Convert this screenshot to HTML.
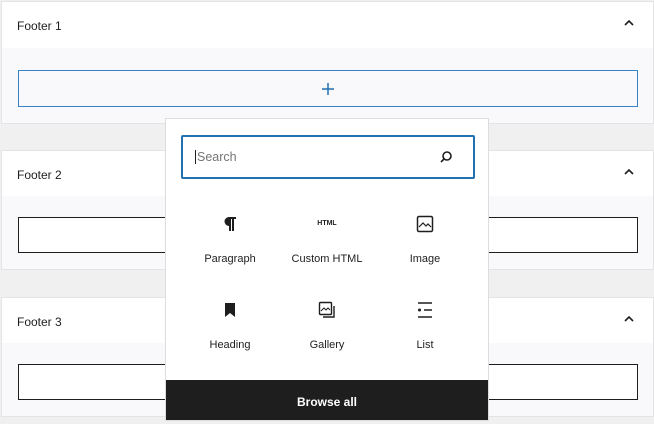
<!DOCTYPE html>
<html><head><style>
body{margin:0;width:654px;height:420px;background:#f0f0f1;font-family:"Liberation Sans",sans-serif;position:relative;overflow:hidden}
.p{position:absolute;left:1px;width:651px;background:#f9f9fb;border:1px solid #e4e4e7}
.h{height:45px;background:#fff;position:relative;font-size:12px;color:#1e1e1e}
.h span{position:absolute;left:15px;top:17px}
.h svg{position:absolute;right:18px;top:17px}
.box{position:absolute;left:16px;width:618px;height:34px;border:1px solid #1e1e1e;background:#fff}
.pop{position:absolute;left:165px;top:118px;width:324px;height:303px;background:#fff;border:1px solid #ddd;box-sizing:border-box}
.it{position:absolute;width:100px;text-align:center;font-size:11px;color:#1e1e1e}
.it svg{display:block;margin:0 auto 20px}
</style></head><body>
<div class="p" style="top:1px;height:121px"><div class="h" style="height:46px"><span>Footer 1</span><svg width="12" height="8" viewBox="0 0 12 8"><path d="M2 6L6 2L10 6" stroke="#1e1e1e" stroke-width="1.6" fill="none"/></svg></div>
<div class="box" style="top:68px;border-color:#3582c4;background:#f9f9fb;height:35px"><svg style="position:absolute;left:302px;top:11px" width="14" height="14"><path d="M7 1V13M1 7H13" stroke="#2271b1" stroke-width="1.5"/></svg></div></div>
<div class="p" style="top:150px;height:118px"><div class="h"><span>Footer 2</span><svg width="12" height="8" viewBox="0 0 12 8"><path d="M2 6L6 2L10 6" stroke="#1e1e1e" stroke-width="1.6" fill="none"/></svg></div>
<div class="box" style="top:66px"></div></div>
<div class="p" style="top:297px;height:118px"><div class="h"><span>Footer 3</span><svg width="12" height="8" viewBox="0 0 12 8"><path d="M2 6L6 2L10 6" stroke="#1e1e1e" stroke-width="1.6" fill="none"/></svg></div>
<div class="box" style="top:66px"></div></div>
<div class="pop">
<div style="position:absolute;left:15px;top:16px;width:294px;height:44px;border:2px solid #2271b1;box-sizing:border-box;border-radius:2px">
<span style="position:absolute;left:12px;top:13px;font-size:12.5px;color:#757575;border-left:1px solid #1e1e1e;padding-left:1px">Search</span>
<svg style="position:absolute;right:20px;top:13px" width="14" height="14" viewBox="0 0 14 14"><circle cx="8" cy="6" r="4" stroke="#1e1e1e" stroke-width="1.6" fill="none"/><path d="M5 9L2 12" stroke="#1e1e1e" stroke-width="1.6"/></svg></div>
<div class="it" style="left:14px;top:96px"><svg width="16" height="18" viewBox="0 0 16 18"><path d="M8 2H14V4H12V16H10V4H9V16H7V11A4.5 4.5 0 0 1 7 2Z" fill="#1e1e1e"/></svg>Paragraph</div>
<div class="it" style="left:111px;top:96px"><div style="font-size:7px;font-weight:bold;height:18px;line-height:18px;margin-bottom:20px">HTML</div>Custom HTML</div>
<div class="it" style="left:209px;top:96px"><svg width="18" height="18" viewBox="0 0 18 18"><rect x="1.5" y="1.5" width="15" height="15" rx="1.5" stroke="#1e1e1e" stroke-width="1.5" fill="none"/><path d="M3 12L7 8L10 11L12 9L15 12" stroke="#1e1e1e" stroke-width="1.2" fill="none"/></svg>Image</div>
<div class="it" style="left:14px;top:182px"><svg width="18" height="18" viewBox="0 0 18 18"><path d="M4 2H14V16L9 12L4 16Z" fill="#1e1e1e"/></svg>Heading</div>
<div class="it" style="left:111px;top:182px"><svg width="18" height="18" viewBox="0 0 18 18"><rect x="1.5" y="1.5" width="12" height="12" rx="1" stroke="#1e1e1e" stroke-width="1.4" fill="none"/><path d="M3 10L6 7L8 9L10 7L12 9" stroke="#1e1e1e" stroke-width="1" fill="none"/><path d="M16 5V16H5" stroke="#1e1e1e" stroke-width="1.4" fill="none"/></svg>Gallery</div>
<div class="it" style="left:209px;top:182px"><svg width="18" height="18" viewBox="0 0 18 18"><path d="M2 2H16M8 9H16M2 16H16" stroke="#1e1e1e" stroke-width="1.5"/><circle cx="3.5" cy="9" r="1.5" fill="#1e1e1e"/></svg>List</div>
<div style="position:absolute;left:0;bottom:0;width:100%;height:40px;background:#1e1e1e;color:#fff;font-size:12px;font-weight:bold;text-align:center;line-height:44px">Browse all</div>
</div>
</body></html>
